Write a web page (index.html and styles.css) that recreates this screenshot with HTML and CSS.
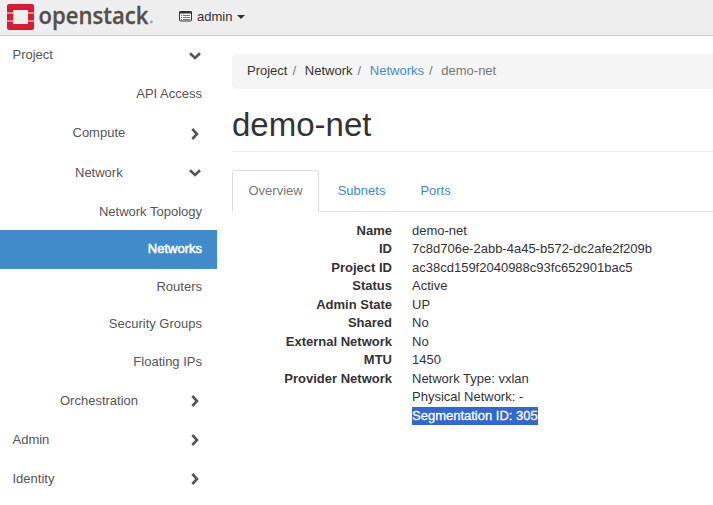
FILE: index.html
```
<!DOCTYPE html>
<html lang="en">
<head>
<meta charset="utf-8">
<title>demo-net - OpenStack Dashboard</title>
<link rel="stylesheet" href="styles.css">
</head>
<body>
<svg class="defs" aria-hidden="true">
  <symbol id="down" viewBox="0 0 12 8"><path d="M1 1.3 6 6l5-4.7" fill="none" stroke="currentColor" stroke-width="2.6"/></symbol>
  <symbol id="right" viewBox="0 0 8 12"><path d="M1.3 1 6 6l-4.7 5" fill="none" stroke="currentColor" stroke-width="2.6"/></symbol>
</svg>
<header class="topbar">
  <svg class="logo" width="160" height="35" viewBox="0 0 160 35" role="img" aria-label="openstack">
    <g fill="#da1a32">
      <path d="M7 12.500V6q0-2 2-2h23q2 0 2 2v6.500h-6V10H13v2.500z"/>
      <path d="M7 13.500h6v7H7zM28 13.500h6v7h-6z"/>
      <path d="M7 21.500h6V24h15v-2.500h6V28q0 2-2 2H9q-2 0-2-2z"/>
    </g>
    <text class="wordmark" x="38.500" y="23.700" textLength="110" lengthAdjust="spacingAndGlyphs">openstack</text>
    <circle cx="151.300" cy="22" r="1.400" fill="#a9a6a3"/>
  </svg>
  <div class="project-menu">
    <svg width="13" height="11" viewBox="0 0 13 11"><rect x=".5" y=".5" width="12" height="9.500" rx="1" fill="#f5f5f5" stroke="#333"/><path d="M0 1.500h13" stroke="#333" stroke-width="2"/><path d="M2 4.500h1M4 4.500h7M2 6.500h1M4 6.500h7M2 8.500h1M4 8.500h7" stroke="#777"/></svg>
    <span>admin</span>
    <svg width="8" height="4" viewBox="0 0 8 4"><path d="M0 0h8L4 4z" fill="#333"/></svg>
  </div>
</header>
<div class="layout">
  <nav class="sidebar">
    <a class="item root">Project<svg class="down"><use href="#down"/></svg></a>
    <a class="item leaf api">API Access</a>
    <a class="item group compute">Compute<svg class="right"><use href="#right"/></svg></a>
    <a class="item group network">Network<svg class="down"><use href="#down"/></svg></a>
    <a class="item leaf topology">Network Topology</a>
    <a class="item leaf active">Networks</a>
    <a class="item leaf">Routers</a>
    <a class="item leaf">Security Groups</a>
    <a class="item leaf">Floating IPs</a>
    <a class="item group orchestration">Orchestration<svg class="right"><use href="#right"/></svg></a>
    <a class="item root">Admin<svg class="right"><use href="#right"/></svg></a>
    <a class="item root">Identity<svg class="right"><use href="#right"/></svg></a>
  </nav>
  <main class="content">
    <ol class="breadcrumb">
      <li>Project</li><li>Network</li><li><a>Networks</a></li><li class="current">demo-net</li>
    </ol>
    <h1>demo-net</h1>
    <div class="tabs"><a class="tab selected">Overview</a><a class="tab">Subnets</a><a class="tab">Ports</a></div>
    <dl class="details">
      <dt>Name</dt><dd>demo-net</dd>
      <dt>ID</dt><dd>7c8d706e-2abb-4a45-b572-dc2afe2f209b</dd>
      <dt>Project ID</dt><dd>ac38cd159f2040988c93fc652901bac5</dd>
      <dt>Status</dt><dd>Active</dd>
      <dt>Admin State</dt><dd>UP</dd>
      <dt>Shared</dt><dd>No</dd>
      <dt>External Network</dt><dd>No</dd>
      <dt>MTU</dt><dd>1450</dd>
      <dt>Provider Network</dt><dd>Network Type: vxlan</dd>
      <dd>Physical Network: -</dd>
      <dd><span class="highlight">Segmentation ID: 305</span></dd>
    </dl>
  </main>
</div>
</body>
</html>
```
FILE: styles.css
```
* { box-sizing: border-box; }
body {
  margin: 0;
  height: 505px;
  overflow: hidden;
  background: #fff;
  color: #333;
  font: 13px/18.5px "Liberation Sans", Arial, sans-serif;
}
.defs { display: none; }
.topbar {
  display: flex;
  height: 36px;
  background: #eee;
  border-bottom: 1px solid #c8c8c8;
}
.logo { display: block; flex: none; overflow: visible; }
.wordmark {
  font: 600 24px "Open Sans", sans-serif;
  fill: #54504a;
  stroke: #54504a;
  stroke-width: .3px;
}
.project-menu {
  display: flex;
  align-items: center;
  gap: 5px;
  height: 33px;
  margin-left: 19px;
}
.project-menu span { padding-top: 1px; }
.layout { display: flex; }
.sidebar {
  flex: none;
  width: 217px;
  color: #555;
}
.item {
  display: flex;
  align-items: center;
  justify-content: space-between;
  height: 39px;
  padding: 0 15px 0 12.5px;
}
.leaf { justify-content: flex-end; height: 37.5px; }
.api { height: 39px; }
.topology { height: 38px; padding-top: 2px; }
.active {
  height: 39px;
  margin-bottom: -1px;
  padding-bottom: 1px;
  background: #428bca;
  color: #fff;
  -webkit-text-stroke: .5px #fff;
}
.compute { padding-left: 72.5px; height: 39px; }
.network { padding-left: 75px; padding-top: 1px; }
.orchestration { padding-left: 60px; padding-top: 1px; height: 40px; }
.down { width: 12px; height: 8px; margin-right: 1px; }
.right { width: 8px; height: 12px; margin-right: 3px; }
.content {
  flex: 1;
  min-width: 0;
  padding: 18px 0 0 15px;
}
.breadcrumb {
  display: flex;
  height: 35px;
  margin: 0;
  padding: 8px 15px;
  list-style: none;
  background: #f5f5f5;
  border-radius: 4px 0 0 4px;
}
.breadcrumb li + li::before {
  content: "/";
  padding: 0 8.7px 0 5px;
  color: #777;
}
.breadcrumb a, .tab { color: #428bca; }
.breadcrumb .current { color: #777; }
h1 {
  height: 63px;
  margin: 0 0 18px;
  padding-top: 18px;
  border-bottom: 1px solid #eee;
  font-size: 33px;
  font-weight: normal;
  line-height: 36px;
}
.tabs {
  display: flex;
  height: 42px;
  border-bottom: 1px solid #ddd;
}
.tab {
  height: 42px;
  margin-right: 2px;
  padding: 11px 15.5px;
  border: 1px solid transparent;
}
.tab.selected {
  color: #777;
  background: #fff;
  border-color: #ddd #ddd #fff;
  border-radius: 4px 4px 0 0;
}
.details {
  display: grid;
  grid-template-columns: 160px 1fr;
  column-gap: 20px;
  margin: 9.7px 0 0;
}
dt { text-align: right; font-weight: bold; }
dd { grid-column: 2; margin: 0; }
.highlight {
  display: inline-block;
  background: #3067d1;
  color: #fff;
  -webkit-text-stroke: .3px #fff;
}
```
